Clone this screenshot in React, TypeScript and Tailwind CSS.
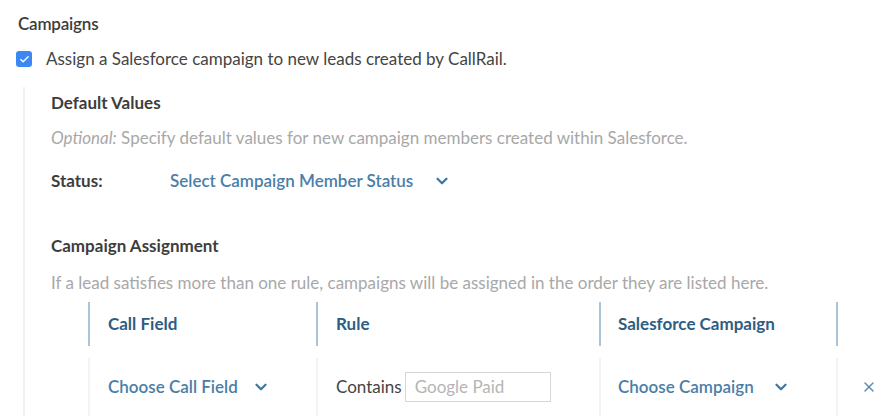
import { ChevronDown, X, Check } from "lucide-react";

export default function App() {
  return (
    <div className="w-[892px] h-[420px] overflow-hidden bg-white font-['Lato',sans-serif] text-[17px] text-[#444]">
      <div className="pl-[18px] pt-[12px]">
        <h2 className="text-[17px] font-semibold text-[#3d3d3d] leading-[24px] tracking-[-0.2px]">Campaigns</h2>
        <label className="flex items-center mt-[12px] -ml-[2px]">
          <span className="w-[16px] h-[16px] rounded-[3px] bg-[#3b88f5] flex items-center justify-center">
            <Check size={11} strokeWidth={3} className="text-white" />
          </span>
          <span className="ml-[14px] leading-[22px]">Assign a Salesforce campaign to new leads created by CallRail.</span>
        </label>
      </div>

      <div className="ml-[23px] mt-[17px] border-l-2 border-[#f0f0f0] pl-[26px] pt-[4px]">
        <h3 className="text-[17px] font-bold text-[#3d3d3d] leading-[24px]">Default Values</h3>
        <p className="mt-[11px] text-[#a8a8a8] leading-[24px]">
          <em>Optional:</em> Specify default values for new campaign members created within Salesforce.
        </p>
        <div className="flex items-center mt-[19px] leading-[24px]">
          <span className="w-[119px] font-bold text-[#3d3d3d]">Status:</span>
          <span className="text-[#4a7ea8] font-semibold">Select Campaign Member Status</span>
          <ChevronDown size={18} strokeWidth={3} className="ml-[20px] text-[#3f77a3]" />
        </div>

        <h3 className="mt-[41px] text-[17px] font-bold text-[#3d3d3d] leading-[24px]">Campaign Assignment</h3>
        <p className="mt-[13px] text-[#a8a8a8] leading-[24px]">
          If a lead satisfies more than one rule, campaigns will be assigned in the order they are listed here.
        </p>

        <div className="ml-[37px] mt-[7px]">
          <div className="flex h-[44px] items-center">
            <div className="w-[228px] h-full border-l-2 border-[#a9c3da] pl-[18px] flex items-center font-bold text-[#2e5d82]">Call Field</div>
            <div className="w-[283px] h-full border-l-2 border-[#a9c3da] pl-[18px] flex items-center font-bold text-[#2e5d82]">Rule</div>
            <div className="w-[237px] h-full border-l-2 border-[#a9c3da] pl-[17px] flex items-center font-bold text-[#2e5d82]">Salesforce Campaign</div>
            <div className="h-full border-l-2 border-[#a9c3da]" />
          </div>
          <div className="flex h-[58px] mt-[12px] items-center">
            <div className="w-[228px] h-full border-l-2 border-[#f3f3f3] pl-[18px] flex items-center text-[#4a7ea8] font-semibold">
              Choose Call Field
              <ChevronDown size={18} strokeWidth={3} className="ml-[14px] text-[#3f77a3]" />
            </div>
            <div className="w-[283px] h-full border-l-2 border-[#f3f3f3] pl-[18px] flex items-center">
              <span className="text-[#444]">Contains</span>
              <div className="ml-[3px] w-[146px] h-[30px] border border-[#d6d6d6] flex items-center pl-[9px] text-[#b5b5b5]">Google Paid</div>
            </div>
            <div className="w-[237px] h-full border-l-2 border-[#f3f3f3] pl-[17px] flex items-center text-[#4a7ea8] font-semibold">
              Choose Campaign
              <ChevronDown size={18} strokeWidth={3} className="ml-[18px] text-[#3f77a3]" />
            </div>
            <div className="h-full border-l-2 border-[#f3f3f3] pl-[23px] flex items-center">
              <X size={16} strokeWidth={2} className="text-[#5b8ab0]" />
            </div>
          </div>
        </div>
      </div>
    </div>
  );
}
